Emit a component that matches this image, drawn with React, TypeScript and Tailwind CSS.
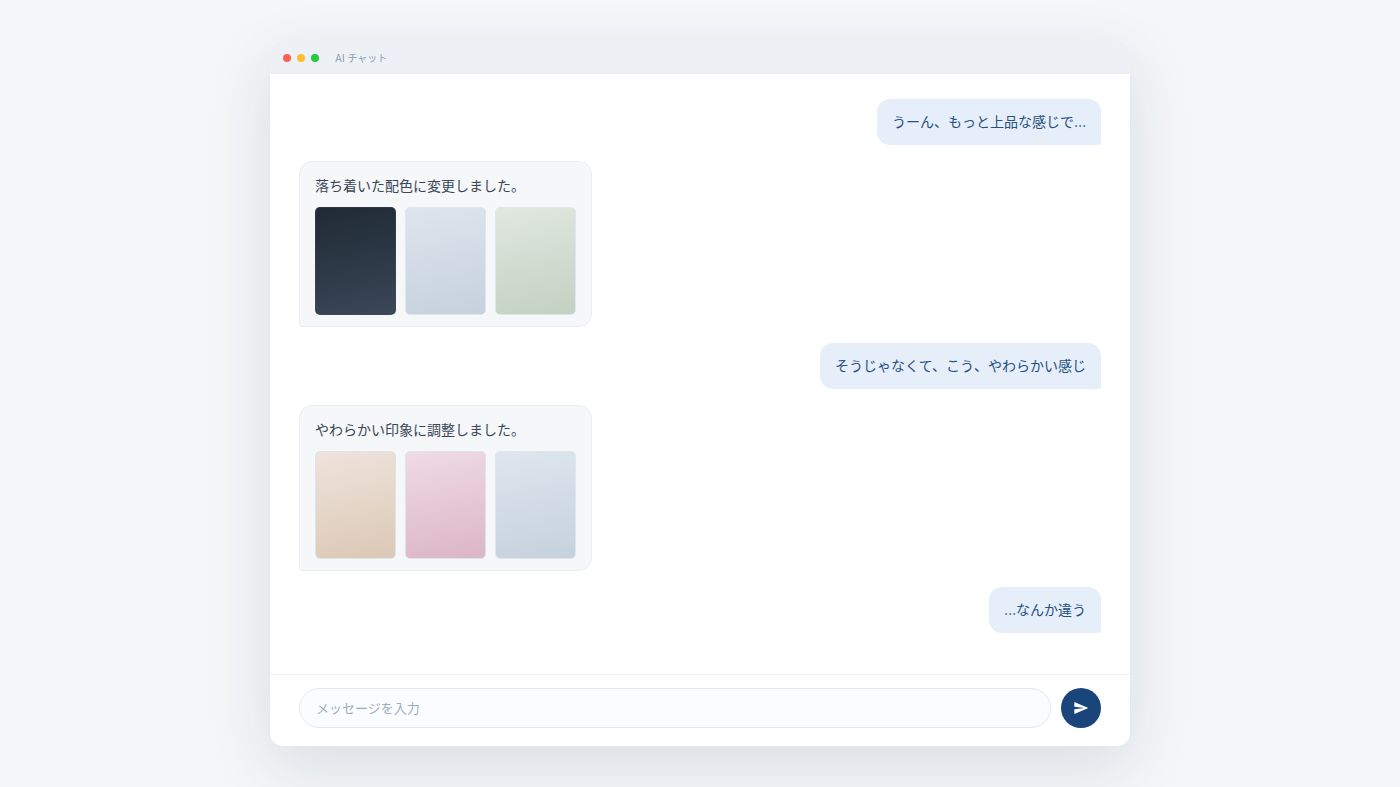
import React from "react";

type Message =
  | { id: number; from: "user"; text: string }
  | { id: number; from: "ai"; text: string; swatches: string[] };

const messages: Message[] = [
  { id: 1, from: "user", text: "うーん、もっと上品な感じで…" },
  {
    id: 2,
    from: "ai",
    text: "落ち着いた配色に変更しました。",
    swatches: [
      "border-[#4b5563]/30 from-[#1f2a35] to-[#3c4758]",
      "border-[#dfe6ee] from-[#dfe5ee] to-[#c5d1dd]",
      "border-[#dfe6ee] from-[#e1e8e0] to-[#c2d1c2]",
    ],
  },
  { id: 3, from: "user", text: "そうじゃなくて、こう、やわらかい感じ" },
  {
    id: 4,
    from: "ai",
    text: "やわらかい印象に調整しました。",
    swatches: [
      "border-[#dfe3ea] from-[#eee4dc] to-[#dbc8b5]",
      "border-[#dfe3ea] from-[#efdce4] to-[#dbb5c6]",
      "border-[#dfe6ee] from-[#dfe6ee] to-[#c5d1dd]",
    ],
  },
  { id: 5, from: "user", text: "…なんか違う" },
];

function TitleBar() {
  return (
    <header className="flex h-[33px] items-center bg-[#edf1f6] px-[13px]">
      <div className="flex gap-[6px]" aria-hidden="true">
        <span className="size-2 rounded-full bg-[#ff5f57]" />
        <span className="size-2 rounded-full bg-[#febc2e]" />
        <span className="size-2 rounded-full bg-[#28c840]" />
      </div>
      <h1 className="ml-4 text-[10px] leading-4 text-[#8a9bb0]">AI チャット</h1>
    </header>
  );
}

function Bubble({ message }: { message: Message }) {
  if (message.from === "user") {
    return (
      <li className="self-end rounded-[13px] rounded-br-[3px] bg-[#e6eefa] px-[15px] py-[11px] text-[#264f82]">
        {message.text}
      </li>
    );
  }
  return (
    <li className="self-start rounded-[13px] rounded-bl-[3px] border border-[#e9eef4] bg-[#f5f7f9] px-[15px] pt-3 pb-[11px] text-[#3a4656]">
      <p>{message.text}</p>
      <div className="mt-[9px] flex gap-[9px]">
        {message.swatches.map((swatch, i) => (
          <div key={i} className={`h-[108px] w-[81px] rounded-[5px] border bg-linear-168 bg-origin-border ${swatch}`} />
        ))}
      </div>
    </li>
  );
}

export default function App() {
  return (
    <div className="flex min-h-screen items-center justify-center bg-[#f4f6f8] font-['Inter','Noto_Sans_CJK_JP',sans-serif]">
      <main className="w-full max-w-[860px] overflow-hidden rounded-[13px] bg-white shadow-[0_20px_64px_rgba(30,50,75,0.12)]">
        <TitleBar />
        <ul className="flex flex-col gap-4 px-[29px] pt-[25px] pb-[41px] text-sm leading-6">
          {messages.map((m) => (
            <Bubble key={m.id} message={m} />
          ))}
        </ul>
        <form
          className="flex items-center gap-[10px] border-t border-[#edf1f6] px-[29px] pt-[13px] pb-[18px]"
          onSubmit={(e) => e.preventDefault()}
        >
          <input
            type="text"
            aria-label="メッセージ"
            placeholder="メッセージを入力"
            className="h-10 min-w-0 flex-1 rounded-full border border-[#e2e8f0] bg-[#fbfcfe] px-4 text-[13px] text-[#3a4656] placeholder:text-[#9dacbd]"
          />
          <button
            type="submit"
            aria-label="送信"
            className="flex size-10 items-center justify-center rounded-full bg-[#1a457b] text-white"
          >
            <svg viewBox="0 0 24 24" className="size-4" fill="currentColor" aria-hidden="true">
              <path d="M2.01 21 23 12 2.01 3 2 10l15 2-15 2z" />
            </svg>
          </button>
        </form>
      </main>
    </div>
  );
}
